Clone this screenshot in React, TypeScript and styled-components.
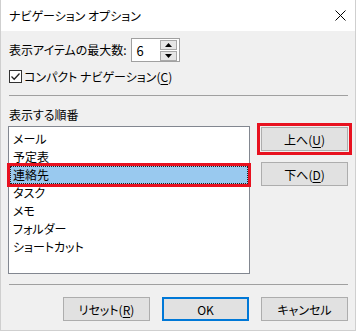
import React from "react";
import styled, { createGlobalStyle } from "styled-components";

const Global = createGlobalStyle`
  html, body { margin: 0; padding: 0; background: #ffffff; }
  body {
    font-family: "Noto Sans CJK JP", "Noto Sans", sans-serif;
    font-size: 12px;
    color: #000;
    font-feature-settings: "palt";
  }
  * { box-sizing: border-box; }
`;

const Window = styled.div`
  width: 356px;
  height: 331px;
  border: 1px solid #cfcfcf;
  border-top: none;
  display: flex;
  flex-direction: column;
  background: #f0f0f0;
`;

const TitleBar = styled.div`
  height: 31px;
  background: #ffffff;
  display: flex;
  align-items: center;
  justify-content: space-between;
  padding: 0 9px 0 8px;
  font-size: 12px;
`;

const Close = styled.svg`
  width: 11px;
  height: 11px;
`;

const Body = styled.div`
  flex: 1;
  display: flex;
  flex-direction: column;
  padding: 7px 7px 0 7px;
`;

const Row = styled.div<{ $mt?: number }>`
  display: flex;
  align-items: center;
  margin-top: ${(p) => p.$mt ?? 0}px;
  line-height: 1;
`;

const Label = styled.span`
  padding-left: 1px;
  white-space: nowrap;
`;

const SpinBox = styled.div`
  margin-left: 4px;
  width: 49px;
  height: 24px;
  border: 1px solid #a0a0a0;
  background: #ffffff;
  display: flex;
  align-items: center;
  justify-content: space-between;
  padding: 0 2px 0 5px;
  font-size: 13px;
`;

const SpinCol = styled.div`
  display: flex;
  flex-direction: column;
  gap: 1px;
`;

const SpinBtn = styled.div`
  width: 17px;
  height: 10px;
  border: 1px solid #a8a8a8;
  background: #e6e6e6;
  display: flex;
  align-items: center;
  justify-content: center;
`;

const Check = styled.div`
  width: 13px;
  height: 13px;
  border: 1px solid #333333;
  background: #ffffff;
  margin-left: 1px;
  margin-right: 2px;
  display: flex;
  align-items: center;
  justify-content: center;
`;

const Sep = styled.div<{ $mt: number }>`
  height: 1px;
  background: #a0a0a0;
  margin-top: ${(p) => p.$mt}px;
  margin-left: 1px;
`;

const SectionLabel = styled.div`
  margin-top: 12px;
  padding-left: 1px;
  line-height: 14px;
`;

const Middle = styled.div`
  display: flex;
  margin-top: 4px;
  gap: 11px;
`;

const List = styled.div`
  width: 243px;
  height: 148px;
  border: 1px solid #828790;
  background: #ffffff;
  padding: 3px 1px;
  display: flex;
  flex-direction: column;
`;

const Item = styled.div<{ $sel?: boolean }>`
  height: 18px;
  padding-left: 2px;
  background: ${(p) => (p.$sel ? "#99c9ef" : "transparent")};
  border: 1px ${(p) => (p.$sel ? "dotted #202020" : "solid transparent")};
  line-height: 16px;
  outline: ${(p) => (p.$sel ? "3px solid #e8111f" : "none")};
  outline-offset: 0px;
`;

const SideButtons = styled.div`
  display: flex;
  flex-direction: column;
  gap: 11px;
  padding-top: 1px;
`;

const Button = styled.button<{ $default?: boolean; $mark?: boolean }>`
  width: 87px;
  height: 24px;
  font: inherit;
  font-size: 12px;
  color: #000;
  background: #e1e1e1;
  border: ${(p) => (p.$default ? "2px solid #0078d7" : "1px solid #adadad")};
  padding: 0;
  display: flex;
  align-items: center;
  justify-content: center;
  outline: ${(p) => (p.$mark ? "3px solid #e8111f" : "none")};
  outline-offset: 1px;
`;

const Key = styled.span`
  text-decoration: underline;
  text-underline-offset: 2px;
`;

const Footer = styled.div`
  display: flex;
  justify-content: flex-end;
  gap: 12px;
  margin-top: 12px;
`;

const items = ["メール", "予定表", "連絡先", "タスク", "メモ", "フォルダー", "ショートカット"];

export default function App() {
  return (
    <>
      <Global />
      <Window>
        <TitleBar>
          <span>ナビゲーション オプション</span>
          <Close viewBox="0 0 11 11">
            <path d="M0.5 0.5 L10.5 10.5 M10.5 0.5 L0.5 10.5" stroke="#000" strokeWidth="1" fill="none" />
          </Close>
        </TitleBar>
        <Body>
          <Row>
            <Label>表示アイテムの最大数:</Label>
            <SpinBox>
              <span>6</span>
              <SpinCol>
                <SpinBtn>
                  <svg width="7" height="4" viewBox="0 0 7 4"><path d="M3.5 0 L7 4 L0 4 Z" fill="#000" /></svg>
                </SpinBtn>
                <SpinBtn>
                  <svg width="7" height="4" viewBox="0 0 7 4"><path d="M0 0 L7 0 L3.5 4 Z" fill="#000" /></svg>
                </SpinBtn>
              </SpinCol>
            </SpinBox>
          </Row>
          <Row $mt={8}>
            <Check>
              <svg width="11" height="11" viewBox="0 0 11 11">
                <path d="M1.5 5.5 L4.2 8.2 L9.5 2.5" stroke="#222" strokeWidth="1.3" fill="none" />
              </svg>
            </Check>
            <span>
              コンパクト ナビゲーション(<Key>C</Key>)
            </span>
          </Row>
          <Sep $mt={12} />
          <SectionLabel>表示する順番</SectionLabel>
          <Middle>
            <List>
              {items.map((t, i) => (
                <Item key={t} $sel={i === 2}>
                  {t}
                </Item>
              ))}
            </List>
            <SideButtons>
              <Button $mark>
                上へ(<Key>U</Key>)
              </Button>
              <Button>
                下へ(<Key>D</Key>)
              </Button>
            </SideButtons>
          </Middle>
          <Sep $mt={10} />
          <Footer>
            <Button>
              リセット(<Key>R</Key>)
            </Button>
            <Button $default>OK</Button>
            <Button>キャンセル</Button>
          </Footer>
        </Body>
      </Window>
    </>
  );
}
